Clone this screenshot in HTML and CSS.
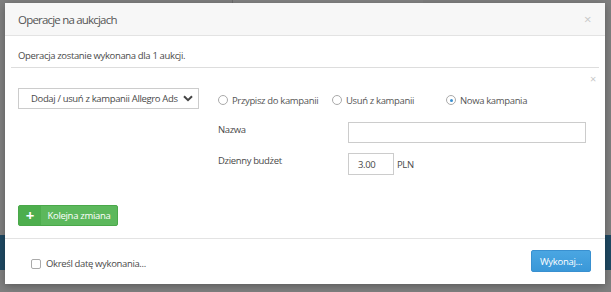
FILE: index.html
```html
<!DOCTYPE html>
<html lang="pl">
<head>
    <meta charset="UTF-8">
    <meta name="viewport" content="width=device-width, initial-scale=1.0">
    <title>Operacje na aukcjach</title>
    <link rel="stylesheet" href="styles.css">
</head>
<body>
    <div class="backdrop">
        <div class="bg-search">Szukaj</div>
        <div class="bg-band"></div>
    </div>

    <div class="modal">
        <div class="modal-header">
            <h4 class="modal-title">Operacje na aukcjach</h4>
            <span class="close">&times;</span>
        </div>

        <div class="modal-body">
            <p class="info">Operacja zostanie wykonana dla 1 aukcji.</p>

            <div class="change">
                <span class="close close-small">&times;</span>
                <div class="change-row">
                    <div class="select">
                        <span>Dodaj / usuń z kampanii Allegro Ads</span>
                        <svg width="10" height="7" viewBox="0 0 10 7"><path d="M1 1.2 L5 5.2 L9 1.2" fill="none" stroke="#444" stroke-width="2"/></svg>
                    </div>

                    <div class="options">
                        <div class="radios">
                            <label class="radio"><span class="dot"></span>Przypisz do kampanii</label>
                            <label class="radio"><span class="dot"></span>Usuń z kampanii</label>
                            <label class="radio checked"><span class="dot"></span>Nowa kampania</label>
                        </div>

                        <div class="field">
                            <label>Nazwa</label>
                            <div class="input wide"></div>
                        </div>
                        <div class="field second">
                            <label>Dzienny budżet</label>
                            <div class="input short">3.00</div>
                            <span class="unit">PLN</span>
                        </div>
                    </div>
                </div>
            </div>

            <button class="btn-green"><span class="plus">+</span><span class="label">Kolejna zmiana</span></button>
        </div>

        <div class="modal-footer">
            <label class="check"><span class="box"></span>Określ datę wykonania...</label>
            <button class="btn-blue">Wykonaj...</button>
        </div>
    </div>
</body>
</html>
```

FILE: styles.css
```css
body {
    margin: 0;
    font-family: "Open Sans", "DejaVu Sans", sans-serif;
    background: #808080;
    width: 611px;
    height: 292px;
    overflow: hidden;
    position: relative;
}
.backdrop {
    position: absolute;
    inset: 0;
}
.bg-search {
    position: absolute;
    left: 232px;
    top: 0;
    width: 190px;
    height: 3px;
    border-left: 1px solid #6e6e6e;
    background: #838383;
}
.bg-band {
    position: absolute;
    left: 0;
    right: 0;
    top: 235px;
    height: 35px;
    background: #1f4963;
}
.modal {
    position: relative;
    margin: 3px 0 0 5px;
    width: 600px;
    height: 281px;
    background: #fff;
    box-shadow: 0 2px 8px rgba(0,0,0,0.3);
    display: flex;
    flex-direction: column;
    color: #555;
    font-size: 9.5px;
    letter-spacing: -0.35px;
}
.modal-header {
    height: 32px;
    background: #f7f7f7;
    border-bottom: 1px solid #e3e3e3;
    display: flex;
    align-items: center;
    justify-content: space-between;
    padding: 0 14px 0 13px;
}
.modal-title {
    margin: 0;
    font-weight: normal;
    font-size: 11.5px;
    letter-spacing: -0.8px;
    color: #555;
}
.close {
    color: #c8c8c8;
    font-size: 13px;
    line-height: 1;
}
.modal-body {
    flex: 1;
    padding: 0 6px;
}
.info {
    margin: 0;
    height: 31px;
    line-height: 40px;
    padding-left: 7px;
    color: #4a4a4a;
    border-bottom: 1px solid #ddd;
}
.change {
    position: relative;
    padding: 20px 0 0 7px;
    height: 117px;
}
.close-small {
    position: absolute;
    right: 3px;
    top: 5px;
    font-size: 11px;
}
.change-row {
    display: flex;
    gap: 19px;
}
.select {
    width: 181px;
    height: 21px;
    border: 1px solid #ccc;
    box-sizing: border-box;
    display: flex;
    align-items: center;
    justify-content: space-between;
    padding: 0 5px 0 12px;
    color: #4a4a4a;
    white-space: nowrap;
}
.select span {
    overflow: hidden;
    width: 152px;
}
.options {
    display: flex;
    flex-direction: column;
}
.radios {
    display: flex;
    height: 24px;
    align-items: center;
    color: #555;
    white-space: nowrap;
}
.radio {
    display: flex;
    align-items: center;
    gap: 4px;
    width: 114px;
}
.dot {
    width: 10px;
    height: 10px;
    border: 1px solid #aaa;
    border-radius: 50%;
    box-sizing: border-box;
    position: relative;
}
.radio.checked .dot::after {
    content: "";
    position: absolute;
    left: 2.5px;
    top: 2.5px;
    width: 3px;
    height: 3px;
    border-radius: 50%;
    background: #3a8fd0;
}
.field {
    display: flex;
    align-items: center;
    color: #4a4a4a;
    margin-top: 10px;
}
.field label {
    width: 130px;
    align-self: flex-start;
    padding-top: 1px;
}
.input {
    height: 21px;
    border: 1px solid #ccc;
    box-sizing: border-box;
    display: flex;
    align-items: center;
    padding-left: 9px;
}
.input.wide { width: 238px; }
.input.short { width: 46px; height: 22px; }
.unit {
    margin-left: 3px;
}
.btn-green {
    display: flex;
    align-items: stretch;
    margin-left: 7px;
    height: 21px;
    width: 100px;
    padding: 0;
    border: 1px solid #4aa84a;
    border-radius: 2px;
    background: #5cb85c;
    color: #fff;
    font-family: inherit;
    font-size: 9.5px;
    letter-spacing: -0.3px;
}
.btn-green .plus {
    width: 22px;
    background: #4dae4d;
    font-size: 15px;
    font-weight: bold;
    line-height: 18px;
}
.btn-green .label {
    flex: 1;
    line-height: 19px;
    text-align: center;
}
.modal-footer {
    height: 44px;
    border-top: 1px solid #e3e3e3;
    display: flex;
    align-items: center;
    justify-content: space-between;
    padding: 0 14px 1px 26px;
}
.check {
    display: flex;
    align-items: center;
    gap: 5px;
    color: #4a4a4a;
    margin-top: 5px;
}
.box {
    width: 10px;
    height: 10px;
    border: 1px solid #aaa;
    border-radius: 2px;
    box-sizing: border-box;
}
.btn-blue {
    width: 60px;
    height: 22px;
    border: 1px solid #3990d0;
    border-radius: 2px;
    background: linear-gradient(#4aa6e2, #3a98d8);
    color: #fff;
    font-family: inherit;
    font-size: 9.5px;
    letter-spacing: -0.3px;
    padding: 0;
}
```
